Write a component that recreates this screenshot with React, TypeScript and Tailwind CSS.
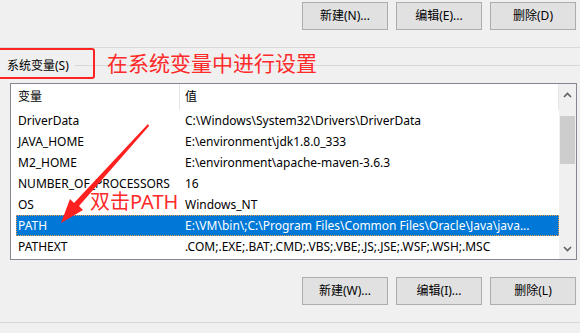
import React from "react";

const font = { fontFamily: '"Noto Sans", "Noto Sans CJK SC", sans-serif' };

function Btn({ label }: { label: string }) {
  return (
    <div className="w-[86px] h-[28px] bg-[#e1e1e1] border border-[#adadad] flex items-center justify-center text-[12px] text-black">
      {label}
    </div>
  );
}

const rows: [string, string][] = [
  ["DriverData", "C:\\Windows\\System32\\Drivers\\DriverData"],
  ["JAVA_HOME", "E:\\environment\\jdk1.8.0_333"],
  ["M2_HOME", "E:\\environment\\apache-maven-3.6.3"],
  ["NUMBER_OF_PROCESSORS", "16"],
  ["OS", "Windows_NT"],
  ["PATH", "E:\\VM\\bin\\;C:\\Program Files\\Common Files\\Oracle\\Java\\java..."],
  ["PATHEXT", ".COM;.EXE;.BAT;.CMD;.VBS;.VBE;.JS;.JSE;.WSF;.WSH;.MSC"],
];

export default function App() {
  return (
    <div className="relative w-[580px] h-[333px] bg-[#f0f0f0] overflow-hidden" style={font}>
      {/* top buttons */}
      <div className="flex justify-end gap-[8px] pr-[4px] pt-[2px]">
        <Btn label="新建(N)..." />
        <Btn label="编辑(E)..." />
        <Btn label="删除(D)" />
      </div>
      <div className="mt-[17px] h-px bg-[#d9d9d9]" />
      {/* group header */}
      <div className="h-[35px] flex items-center pl-[7px]">
        <span className="text-[12px] text-black">系统变量(S)</span>
        <div className="flex-1 h-px bg-[#d9d9d9] ml-[6px]" />
      </div>
      {/* list */}
      <div className="ml-[10px] w-[567px] h-[177px] border border-[#828790] bg-white flex">
        <div className="flex-1 flex flex-col text-[12px] text-black">
          <div className="h-[26px] flex items-center">
            <div className="w-[169px] pl-[7px] h-full flex items-center border-r border-[#e5e5e5]">变量</div>
            <div className="flex-1 pl-[5px] h-full flex items-center border-r border-[#e5e5e5]">值</div>
          </div>
          {rows.map(([k, v]) => {
            const sel = k === "PATH";
            return (
              <div
                key={k}
                className={
                  sel
                    ? "ml-[5px] h-[21px] flex items-center bg-[#0078d7] text-white border border-dotted border-[#f5a040]"
                    : "ml-[5px] h-[21px] flex items-center border border-transparent"
                }
              >
                <div className="w-[164px] pl-[1px] whitespace-nowrap">{k}</div>
                <div className="flex-1 pl-[4px] whitespace-nowrap overflow-hidden">{v}</div>
              </div>
            );
          })}
        </div>
        <div className="w-[17px] bg-[#f0f0f0] flex flex-col items-center">
          <div className="h-[22px] flex items-center justify-center">
            <svg width="9" height="6" viewBox="0 0 9 6">
              <path d="M1 5 L4.5 1.5 L8 5" fill="none" stroke="#606060" strokeWidth="1.6" />
            </svg>
          </div>
          <div className="mt-[10px] w-[15px] h-[48px] bg-[#cdcdcd]" />
          <div className="flex-1" />
          <div className="h-[20px] flex items-center justify-center">
            <svg width="9" height="6" viewBox="0 0 9 6">
              <path d="M1 1 L4.5 4.5 L8 1" fill="none" stroke="#606060" strokeWidth="1.6" />
            </svg>
          </div>
        </div>
      </div>
      {/* bottom buttons */}
      <div className="mt-[17px] flex justify-end gap-[8px] pr-[4px]">
        <Btn label="新建(W)..." />
        <Btn label="编辑(I)..." />
        <Btn label="删除(L)" />
      </div>
      <div className="mt-[17px] h-px bg-[#d9d9d9]" />

      {/* annotations */}
      <div className="absolute left-[-3px] top-[48px] w-[98px] h-[31px] border-2 border-[#ff2424] rounded-[3px]" />
      <div className="absolute left-[107px] top-[48px] text-[21px] leading-[30px] text-[#ff2a2a]" style={font}>
        在系统变量中进行设置
      </div>
      <div className="absolute left-[90px] top-[187px] text-[20px] leading-[30px] text-[#ff2a2a]" style={font}>
        双击PATH
      </div>
      <svg className="absolute left-0 top-0" width="580" height="333" viewBox="0 0 580 333">
        <polygon points="148,124 149,126 79,206 83,210 61,223 70,199 74,203 147,125" fill="#ff2020" />
      </svg>
    </div>
  );
}
